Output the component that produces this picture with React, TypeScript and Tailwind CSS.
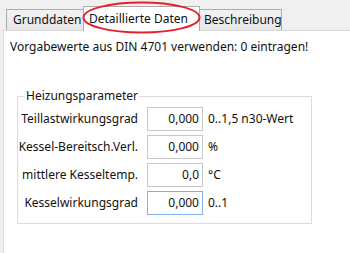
import * as React from 'react';

type ParamRow = {
  label: string;
  value: string;
  unit: string;
  focused?: boolean;
};

const rows: ParamRow[] = [
  { label: 'Teillastwirkungsgrad', value: '0,000', unit: '0..1,5 n30-Wert' },
  { label: 'Kessel-Bereitsch.Verl.', value: '0,000', unit: '%' },
  { label: 'mittlere Kesseltemp.', value: '0,0', unit: '°C' },
  { label: 'Kesselwirkungsgrad', value: '0,000', unit: '0..1', focused: true },
];

const font = "font-['Segoe_UI','Noto_Sans','Liberation_Sans',sans-serif]";

export default function App(): JSX.Element {
  return (
    <div className={`relative flex h-[253px] w-[350px] flex-col overflow-hidden bg-[#f0f0f0] pl-[3px] pt-[5px] text-[12px] text-[#111] ${font}`}>
      {/* tab strip */}
      <div className="flex h-[25px] items-end pl-[3px]">
        <div className="flex h-[21px] w-[77px] items-center border border-b-0 border-r-0 border-[#acacac] bg-gradient-to-b from-[#f2f2f2] to-[#e6e6e6] pl-[6px] leading-none">
          Grunddaten
        </div>
        <div className="relative z-10 -mb-px flex h-[25px] w-[117px] items-center border border-b-0 border-[#acacac] bg-white pl-[5px] leading-none">
          Detaillierte Daten
        </div>
        <div className="flex h-[21px] w-[82px] items-center border border-b-0 border-l-0 border-[#acacac] bg-gradient-to-b from-[#f2f2f2] to-[#e6e6e6] pl-[4px] leading-none">
          Beschreibung
        </div>
      </div>

      {/* panel */}
      <div className="flex-1 border border-r-0 border-b-0 border-[#d9d9d9] bg-white pl-[6px] pt-[8px]">
        <p className="whitespace-nowrap leading-[16px]">Vorgabewerte aus DIN 4701 verwenden: 0 eintragen!</p>

        <fieldset className="ml-[7px] mt-[34px] w-[295px] border border-[#dcdcdc] pb-[8px] pl-0 pr-0">
          <legend className="ml-[7px] px-[1px] leading-[14px]">Heizungsparameter</legend>
          <div className="mt-[4px] flex flex-col gap-[4px]">
            {rows.map((row) => (
              <div key={row.label} className="flex h-[24px] items-center">
                <span className="flex w-[121px] shrink-0 justify-end whitespace-nowrap pr-[1px] leading-none">{row.label}</span>
                <div
                  className={`ml-[8px] flex h-[24px] w-[56px] items-center justify-end border px-[3px] leading-none ${
                    row.focused ? 'border-[#7eb4ea]' : 'border-[#c8c8c8]'
                  }`}
                >
                  {row.value}
                </div>
                <span className="ml-[5px] whitespace-nowrap leading-none">{row.unit}</span>
              </div>
            ))}
          </div>
        </fieldset>
      </div>

      {/* red highlight ellipse */}
      <svg className="pointer-events-none absolute left-0 top-0 z-20" width="350" height="60" viewBox="0 0 350 60">
        <ellipse cx="141.5" cy="17.5" rx="58" ry="15" fill="none" stroke="#e3212b" strokeWidth="2" />
      </svg>
    </div>
  );
}
